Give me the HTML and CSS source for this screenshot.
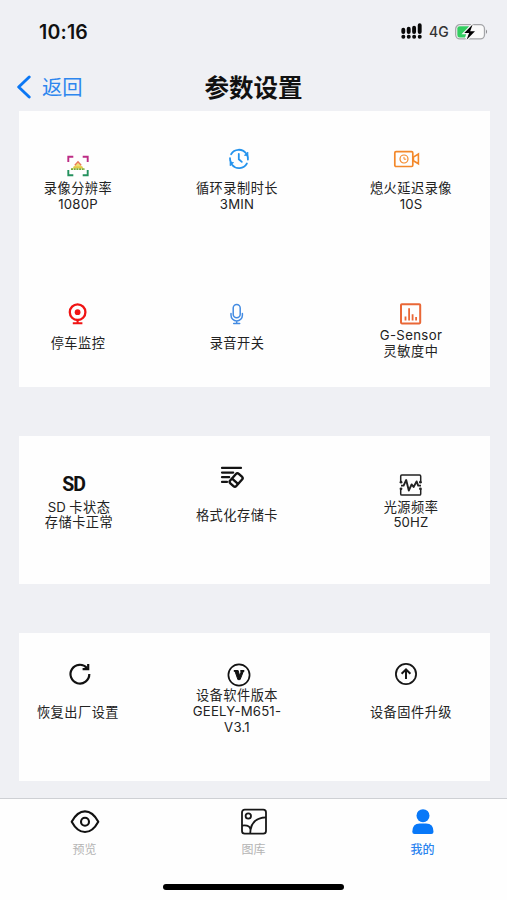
FILE: index.html
```html
<!DOCTYPE html>
<html lang="zh-CN">
<head>
<meta charset="utf-8">
<title>参数设置</title>
<link rel="stylesheet" href="styles.css">
</head>
<body>
<div class="screen">
  <header class="status">
    <span class="time">10:16</span>
    <div class="indicators">
      <svg width="22" height="17" viewBox="0 0 22 17"><g stroke="#080808" stroke-width="3.9" stroke-linecap="round"><path d="M2.3 6.8V9M7.7 5.8V9M13.1 4.8V9M18.7 2.3V9"/><path d="M2.3 13.8h.1M7.7 13.8h.1M13.1 13.8h.1M18.7 13.8h.1"/></g></svg>
      <span class="network">4G</span>
      <svg width="33" height="18" viewBox="0 0 33 18"><rect x=".7" y="1.7" width="28.8" height="14.2" rx="4.2" fill="#fafafa" stroke="#a4a5a8" stroke-width="1.3"/><path d="M4.6 3.2H14L10 14.5H4.6Q2.3 14.5 2.3 12V5.5Q2.3 3.2 4.6 3.2z" fill="#32cd60"/><path d="M31 6.6q2.1 2.2 0 4.4z" fill="#8a8a8d"/><path d="M17.6 1.5 9.3 10h4.8l-2.5 6.8 8.4-8.5h-4.8z" fill="#000" stroke="#f7f7f7" stroke-width="2.4" paint-order="stroke"/></svg>
    </div>
  </header>
  <nav class="navbar">
    <a class="back"><svg width="16" height="24" viewBox="0 0 16 24"><path d="M13.2 2 2.7 12l10.5 10" fill="none" stroke="#0b77f4" stroke-width="2.9" stroke-linecap="round" stroke-linejoin="round"/></svg><span>返回</span></a>
    <h1>参数设置</h1>
  </nav>
  <main>
    <section class="card recording">
      <div class="cell low tight">
        <svg class="icon" width="24" height="24" viewBox="0 0 24 24" fill="none"><path d="M2.3 8V2.8h5M16.7 2.8h5V8" stroke="#bd2c85" stroke-width="1.9"/><path d="M2.3 16v5.2h5M16.7 21.2h5V16" stroke="#24915e" stroke-width="1.9"/><path d="M12 8 6 14.7h12z" fill="#f1df74"/><path d="m8.8 11.2 3.2-3.4 3.2 3.4" stroke="#e8775a" stroke-width="1.3"/><path d="M7.4 13.1h9.2" stroke="#d9b72d"/><path d="M5 15.2h14" stroke="#77a936" stroke-width="1.8" stroke-dasharray="2 .7"/></svg>
        <p>录像分辨率<br><span class="latin">1080P</span></p>
      </div>
      <div class="cell right2">
        <svg class="icon" width="24" height="24" viewBox="0 0 24 24" fill="none" stroke="#2493ed" stroke-width="1.8"><path d="M4.1 7.2A9 9 0 0 1 19 6.3M3 11.2a9 9 0 0 0 1 4.5M20 7.5a9 9 0 0 1 .9 5.2M19.9 16.5A9 9 0 0 1 5 17.7M11.8 7v5.3l3 2.6" stroke-linecap="round"/><path d="M20.9 5.1v3.7l-3.5-.5zM3.1 18.8v-3.7l3.5.5z" fill="#2493ed" stroke-width=".8"/></svg>
        <p>循环录制时长<br><span class="latin">3MIN</span></p>
      </div>
      <div class="cell left4">
        <svg class="icon" width="28" height="24" viewBox="0 0 28 24" fill="none" stroke="#f3882a" stroke-width="1.7"><rect x="1.8" y="4.7" width="18" height="14.8" rx="1.2"/><circle cx="11" cy="12" r="4" stroke-width="1.2"/><path d="M11 9.9v2.3h2.2" stroke-width="1"/><path d="m20.4 10.2 5-3.2v9.8l-5-3.1z" stroke-width="1.6"/></svg>
        <p>熄火延迟录像<br><span class="latin">10S</span></p>
      </div>
      <div class="cell">
        <svg class="icon" width="24" height="24" viewBox="0 0 24 24" fill="none" stroke="#f01414"><circle cx="11.6" cy="10.2" r="7.8" stroke-width="2.3"/><circle cx="11.6" cy="10.2" r="2.9" fill="#f01414" stroke="none"/><path d="M11.6 18v3M6.8 21.2h9.6" stroke-width="2.1"/></svg>
        <p>停车监控</p>
      </div>
      <div class="cell">
        <svg class="icon" width="24" height="24" viewBox="0 0 24 24" fill="none" stroke="#438be2" stroke-width="1.5" stroke-linecap="round"><rect x="8.2" y="2.5" width="7" height="13.2" rx="3.5"/><path d="M6 11.5v1.7a5.7 5.7 0 0 0 11.4 0v-1.7M11.7 19v2.3M8.7 21.5h6"/></svg>
        <p>录音开关</p>
      </div>
      <div class="cell tight">
        <svg class="icon" width="24" height="24" viewBox="0 0 24 24" fill="none" stroke="#e96736"><rect x="2" y="2.2" width="19.2" height="19.2" rx=".8" stroke-width="2"/><path d="M6.5 18.5v-4M10.1 18.5V6.2M13.6 18.5v-6.2M17.1 18.5v-3.4" stroke-width="1.8"/></svg>
        <p><span class="latin wide">G-Sensor</span><br>灵敏度中</p>
      </div>
    </section>

    <section class="card storage">
      <div class="cell low tight">
        <span class="icon sd">SD</span>
        <p class="sd-label"><span class="latin">SD</span> 卡状态<br>存储卡正常</p>
      </div>
      <div class="cell loose left5">
        <svg class="icon" width="24" height="24" viewBox="0 0 24 24" fill="none" stroke="#141414" stroke-width="2.2" stroke-linecap="round"><path d="M2 2.9h19M2 7.6h11.2M2 12.2h7.2M2 16.9h5"/><g transform="rotate(42 16 15)" stroke-width="2.4"><rect x="12" y="8.6" width="8.2" height="12.6" rx="2"/><path d="M12.5 16.5H20"/></g></svg>
        <p>格式化存储卡</p>
      </div>
      <div class="cell low tight">
        <svg class="icon" width="24" height="24" viewBox="0 0 24 24" fill="none" stroke="#222" stroke-width="1.5"><path d="M1.7 8.5V3.2q0-1.1 1.1-1.1h17.8q1.1 0 1.1 1.1v5.3M1.7 16v4.9q0 1.1 1.1 1.1h17.8q1.1 0 1.1-1.1V16"/><path d="M2 12.6h2.6L7.2 7l2.6 10.6 2.8-6.2 2 2.6 3-5.6 1.6 4.2H22" stroke-width="1.9" stroke-linejoin="round"/><g fill="#222" stroke="none"><circle cx="2" cy="9.2" r="1.4"/><circle cx="2" cy="15.8" r="1.4"/><circle cx="21.4" cy="9.2" r="1.4"/><circle cx="21.4" cy="15.8" r="1.4"/></g></svg>
        <p>光源频率<br><span class="latin">50HZ</span></p>
      </div>
    </section>

    <section class="card device">
      <div class="cell loose right2">
        <svg class="icon" width="24" height="24" viewBox="0 0 24 24" fill="none" stroke="#111" stroke-width="2.2"><path d="M19 6A9.4 9.4 0 1 0 21.3 12.1"/><path d="M20.2 1.9v5.2h-5.6"/></svg>
        <p>恢复出厂设置</p>
      </div>
      <div class="cell version right2">
        <svg class="icon" width="24" height="24" viewBox="0 0 24 24" fill="none" stroke="#111"><circle cx="12" cy="12" r="10.6" stroke-width="1.7"/><path d="M6.8 7.9h4.6M13.3 7.9h4" stroke-width="1.8"/><path d="m7.9 8 3 8.6h2.2L16.5 8h-2.1l-1.6 5L11.2 8z" fill="#111"/></svg>
        <p>设备软件版本<br><span class="latin">GEELY-M651-<br>V3.1</span></p>
      </div>
      <div class="cell loose left5">
        <svg class="icon" width="24" height="24" viewBox="0 0 24 24" fill="none" stroke="#171717" stroke-width="1.8"><circle cx="12" cy="12" r="10.1"/><path d="M12 17V8M7.6 11.7 12 7.5l4.4 4.2" stroke-width="2"/></svg>
        <p>设备固件升级</p>
      </div>
    </section>
  </main>
  <footer>
    <div class="tabs">
      <a class="tab"><svg width="30" height="28" viewBox="0 0 30 28" fill="none" stroke="#111" stroke-width="2.1"><path d="M1.7 13.7Q7.3 3.4 15 3.4t13.3 10.3Q22.7 24 15 24T1.7 13.7z" stroke-linejoin="round"/><circle cx="15" cy="13.7" r="4"/></svg><span>预览</span></a>
      <a class="tab"><svg width="28" height="28" viewBox="0 0 28 28" fill="none" stroke="#171717" stroke-width="1.8"><rect x="2" y="1.7" width="24" height="24" rx="2.7"/><circle cx="8.3" cy="8" r="2.7"/><path d="M10.2 25.7Q10.5 9.8 26 9.4M2 17.6q7.7-1 8.4 3.7"/></svg><span>图库</span></a>
      <a class="tab active"><svg width="28" height="28" viewBox="0 0 28 28" fill="#0878f8"><circle cx="14" cy="7.7" r="6.5"/><path d="M3.3 23.8q0-8.3 7.5-8.3h6.2q7.5 0 7.5 8.3 0 2.3-2.2 2.3H5.5q-2.2 0-2.2-2.3z"/></svg><span>我的</span></a>
    </div>
    <div class="home-indicator"></div>
  </footer>
</div>
</body>
</html>
```
FILE: styles.css
```css
* { box-sizing: border-box; }
body {
  margin: 0;
  background: #eff0f4;
  color: #222;
  font-family: Inter, "Noto Sans CJK SC", sans-serif;
}
.screen { width: 507px; height: 900px; display: flex; flex-direction: column; overflow: hidden; }
.status {
  height: 63px;
  padding: 0 19px 0 39px;
  display: flex;
  align-items: center;
  justify-content: space-between;
}
.time { font-size: 19.5px; font-weight: 600; letter-spacing: .2px; color: #111; }
.indicators { display: flex; align-items: center; }
.indicators svg { display: block; }
.network { font-size: 14px; font-weight: 500; margin: 0 6px 0 6px; width: 20px; color: #333; }
.navbar {
  height: 48px;
  display: grid;
  grid-template-columns: 1fr auto 1fr;
  align-items: center;
  padding: 0 16px;
}
.back { display: flex; align-items: center; gap: 10px; color: #2d86ee; font-size: 20.3px; }
.back svg { display: block; }
.back span { line-height: 24px; padding-top: 1px; }
h1 { margin: 0; font-size: 24.5px; line-height: 30px; padding-top: 1px; font-weight: 700; color: #111; }
main { display: flex; flex-direction: column; gap: 49px; padding: 0 17.5px 0 19px; flex: none; height: 686.5px; }
.card {
  display: grid;
  grid-template-columns: 118px 200px 148px;
  background: #fefefe;
  height: 148px;
  flex: none;
}
.recording { grid-template-rows: 155px 84.5px; height: 275.5px; padding-top: 36px; }
.storage { padding-top: 29px; }
.device { padding-top: 29px; }
.cell { display: flex; flex-direction: column; align-items: center; gap: 10px; }
.tight { gap: 3px; }
.recording .tight:not(.low) { gap: 2px; }
.low { padding-top: 7px; }
.storage .low { padding-top: 8px; }
.loose { gap: 19px; }
.version { gap: 1.5px; padding-top: 1px; }
.icon { display: block; flex: none; }
.right2 .icon { margin-left: 4px; }
.left4 .icon { margin-right: 9px; }
.left5 .icon { margin-right: 10px; }
.cell p {
  margin: 0;
  font-size: 13.2px;
  line-height: 15.8px;
  letter-spacing: .5px;
  text-align: center;
  white-space: nowrap;
}
.latin { letter-spacing: .2px; }
.wide { letter-spacing: .35px; }
.icon.sd {
  height: 24px;
  line-height: 24px;
  margin-right: 9px;
  font-family: Roboto, sans-serif;
  font-size: 19.5px;
  font-weight: 700;
  letter-spacing: -1.2px;
  color: #111;
}
.cell .sd-label { word-spacing: -1px; margin-left: 2px; }
footer { flex: none; height: 102.5px; background: #fefefe; border-top: 1.5px solid #ced0d4; }
.tabs { display: grid; grid-template-columns: repeat(3, 1fr); height: 69px; padding-top: 9px; }
.tab { display: flex; flex-direction: column; align-items: center; gap: 5px; color: #b4b4b4; font-size: 12px; line-height: 18px; }
.tab svg { display: block; }
.active { color: #2b84ef; font-weight: 500; }
.home-indicator { width: 181px; height: 6px; margin: 16px auto 0; border-radius: 3px; background: #000; }
```
